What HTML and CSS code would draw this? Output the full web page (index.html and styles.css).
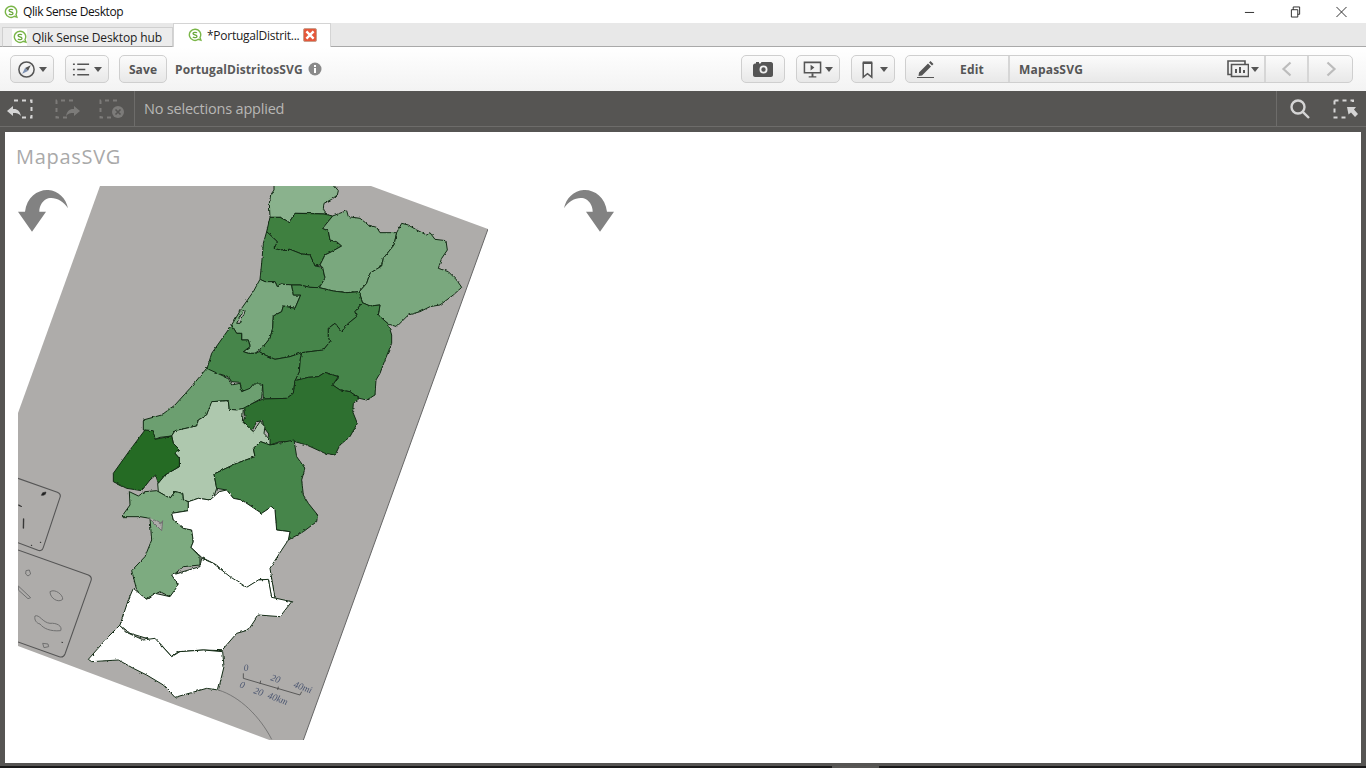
FILE: index.html
```html
<!DOCTYPE html>
<html lang="en">
<head>
<meta charset="utf-8">
<title>Qlik Sense Desktop</title>
<link rel="stylesheet" href="styles.css">
</head>
<body>
<svg class="defs" aria-hidden="true">
  <defs>
    <symbol id="qlik" viewBox="0 0 14 14">
      <path class="q-ring" d="M7 1.2a5.6 5.6 0 1 0 3.3 10.1l2.6.9-.9-2.7A5.6 5.6 0 0 0 7 1.2z"/>
      <path class="q-s" d="M9 4.9C8.300 4.200 5 4 5 5.600C5 7.300 9 6.600 9 8.400C9 10 5.700 9.800 4.900 9"/>
    </symbol>
    <symbol id="turn" viewBox="0 0 50 43">
      <path d="M0 22.700H7C8.700 7.700 20.300.3 30.300 1C40.300 1.700 48 9.300 50 19.300C45.300 11.700 37 7.700 30.300 9.300C25.300 11 21.300 16 21.300 22.700H28L14 42.700Z"/>
    </symbol>
    <filter id="rough" filterUnits="userSpaceOnUse" x="0" y="150" width="520" height="620" color-interpolation-filters="sRGB">
      <feTurbulence type="fractalNoise" baseFrequency="0.25" numOctaves="2" seed="7" result="n"/>
      <feDisplacementMap in="SourceGraphic" in2="n" scale="2.600" xChannelSelector="R" yChannelSelector="G"/>
      <feGaussianBlur stdDeviation="0.35"/>
    </filter>
  </defs>
</svg>

<header class="titlebar">
  <svg class="logo"><use href="#qlik"/></svg>
  <span class="app-name">Qlik Sense Desktop</span>
  <div class="win-controls">
    <svg class="win-icon" viewBox="0 0 12 12"><path d="M1 6.500H11"/></svg>
    <svg class="win-icon" viewBox="0 0 12 12"><path d="M1.500 3.500H8.500V11.500H1.500ZM3.500 3.500V.5H10.500V8.500H8.500"/></svg>
    <svg class="win-icon" viewBox="0 0 12 12"><path d="M.5.5L11.500 11.500M11.500.5L.5 11.500"/></svg>
  </div>
</header>

<nav class="tabbar">
  <div class="tab tab-idle">
    <span class="tab-logo-box"><svg class="logo"><use href="#qlik"/></svg></span>
    <span>Qlik Sense Desktop hub</span>
  </div>
  <div class="tab tab-active">
    <svg class="logo"><use href="#qlik"/></svg>
    <span class="tab-title">*PortugalDistrit...</span>
    <span class="tab-close"><svg viewBox="0 0 10 10"><path d="M2 2L8 8M8 2L2 8"/></svg></span>
  </div>
</nav>

<div class="toolbar">
  <button class="btn btn-icon">
    <svg class="ico" viewBox="0 0 20 20"><circle class="line" cx="10" cy="10" r="8"/><path class="needle-a" d="M14.500 5.500L11.500 11.500L8.500 8.500Z"/><path class="needle-b" d="M5.500 14.500L8.500 8.500L11.500 11.500Z"/></svg>
    <i class="caret"></i>
  </button>
  <button class="btn btn-icon">
    <svg class="ico" viewBox="0 0 20 20"><path class="line" d="M1 4.500H3M5.500 4.500H18M1 10H3M5.500 10H14M1 15.500H3M5.500 15.500H18"/></svg>
    <i class="caret"></i>
  </button>
  <button class="btn btn-text">Save</button>
  <span class="app-title">PortugalDistritosSVG</span>
  <svg class="info" viewBox="0 0 14 14"><circle cx="7" cy="7" r="6.500"/><rect class="info-mark" x="6" y="6" width="2" height="5"/><rect class="info-mark" x="6" y="3" width="2" height="2"/></svg>

  <div class="toolbar-right">
    <button class="btn btn-cam">
      <svg class="ico-cam" viewBox="0 0 20 16"><path class="solid" fill-rule="evenodd" d="M2 2.500H3V1H6V2.500H7.500L8.500 1H18C19 1 20 2 20 3V14C20 15 19 16 18 16H2C1 16 0 15 0 14V4.500C0 3.500 1 2.500 2 2.500ZM10.500 4.500A4 4 0 1 0 10.500 12.500A4 4 0 1 0 10.500 4.500ZM10.500 6.300A2.200 2.200 0 1 1 10.500 10.700A2.200 2.200 0 1 1 10.500 6.300Z"/></svg>
    </button>
    <button class="btn btn-icon">
      <svg class="ico" viewBox="0 0 20 20"><path class="line" d="M1.500 2.500H18.500V13.500H1.500Z"/><path class="solid" d="M8 5L12 8L8 11ZM9 14H11V17H14V18.500H6V17H9Z"/></svg>
      <i class="caret"></i>
    </button>
    <button class="btn btn-icon">
      <svg class="ico" viewBox="0 0 20 20"><path class="line" d="M5.500 3.500H14.500V18L10 14.500L5.500 18Z"/><path class="solid" d="M5 1.500H15V4H5Z"/></svg>
      <i class="caret"></i>
    </button>
    <div class="btn-group">
      <button class="group-item item-edit">
        <svg class="ico-pen" viewBox="0 0 18 18"><path class="solid" d="M2 12.500L11 3.500L14 6.500L5 15.500L1.500 16ZM12 2.500L13.500 1L16.500 4L15 5.500Z"/><path class="hair" d="M0 17.500H17"/></svg>
        <span>Edit</span>
      </button>
      <div class="group-item item-sheet">
        <span>MapasSVG</span>
        <svg class="ico-sheet" viewBox="0 0 22 18"><path class="line" d="M4.500 14.500H1V1H18V4"/><path class="line" d="M4.500 4.500H21.500V16.500H4.500Z"/><path class="solid" d="M8 9H10V13H8ZM12 7H14V13H12ZM16 10H18V13H16Z"/></svg>
        <i class="caret"></i>
      </div>
      <button class="group-item item-nav"><svg class="chev" viewBox="0 0 12 16"><path d="M9.500 1.500L2.500 8L9.500 14.500"/></svg></button>
      <button class="group-item item-nav"><svg class="chev" viewBox="0 0 12 16"><path d="M2.500 1.500L9.500 8L2.500 14.500"/></svg></button>
    </div>
  </div>
</div>

<div class="selbar">
  <div class="sel-tools">
    <svg class="sel-ico sel-on sel-first" viewBox="0 0 26 20"><path class="dash" d="M7 1.500H24.500V18.500H11"/><path class="fill" d="M0 12L6 7V10C10 9.500 13 12 14 17C12 14.500 9.500 14 6 14V17Z"/></svg>
    <svg class="sel-ico sel-off" viewBox="0 0 26 20"><path class="dash" d="M18 1.500H1.500V18.500H12"/><path class="fill" d="M25 12L19 7V10C15 9.500 12 12 11 17C13 14.500 15.500 14 19 14V17Z"/></svg>
    <svg class="sel-ico sel-off" viewBox="0 0 26 20"><path class="dash" d="M18 1.500H1.500V18.500H12"/><circle class="fill" cx="19" cy="13" r="6"/><path class="cross" d="M16.500 10.500L21.500 15.500M21.500 10.500L16.500 15.500"/></svg>
  </div>
  <div class="sel-text">No selections applied</div>
  <div class="sel-right">
    <svg class="sel-search" viewBox="0 0 20 20"><circle cx="8" cy="8" r="6.500"/><path d="M12.800 12.800L19 19"/></svg>
    <svg class="sel-ico sel-on" viewBox="0 0 26 20"><path class="dash" d="M1.500 1.500H20V6M1.500 1.500V18.500H14"/><path class="fill" d="M14 8H23L21 10.500L25 15L22 18L18 13.500L15.500 15.500Z"/></svg>
  </div>
</div>

<main class="sheet">
  <h1 class="sheet-title">MapasSVG</h1>
  <div class="sheet-body">
    <svg class="map" viewBox="18 186 470 554">
      <path class="map-bg" d="M100 186H371L488 229L303 741H272L18 646V413Z"/>
      <path class="map-edge" d="M488 229L303 741"/>
      <g class="map-lines" transform="translate(0 460) scale(.33333)">
        <path d="M54 55L172 97Q184 102 180 112L130 262Q126 276 112 270L54 248"/>
        <path d="M54 270L265 345Q277 350 273 362L195 582Q190 594 178 590L54 546"/>
      </g>
      <g class="map-curve" transform="translate(0 460) scale(.33333)">
        <path d="M655 690C720 710 780 770 815 838"/>
      </g>
      <g class="map-isles" transform="translate(0 460) scale(.33333)">
        <path d="M78 332L88 330L92 342L84 348L77 342Z"/>
        <path d="M150 395C165 385 190 405 188 418C175 430 150 415 150 395Z"/>
        <path d="M105 468C118 462 128 488 150 490C170 488 188 498 182 512C150 515 130 505 120 492C110 490 102 480 105 468Z"/>
        <path d="M55 378L92 413L84 416L55 390Z"/>
        <path d="M128 550L144 552L146 560L132 563Z"/>
      </g>
      <g class="map-specks" transform="translate(0 460) scale(.33333)">
        <path d="M124 106L128 98L138 96L136 103L130 106Z"/>
        <path d="M56 134L66 140L56 137Z"/>
        <path d="M70 176L72 176L71 205L69 205Z"/>
        <path d="M93 255L96 256L95 258Z"/>
        <path d="M120 246L123 247L122 249Z"/>
        <path d="M185 546L188 547L187 549Z"/>
      </g>
      <g class="regions" filter="url(#rough)">
        <g transform="translate(200 180) scale(.33333)">
          <path class="c-viana" d="M222 10L222 30L212 45L208 70L210 112L240 112L268 126L285 100L330 100L372 102L378 104L370 85L372 70L395 58L412 45L415 32L397 10Z"/>
          <path class="c-braga" d="M210 112L240 112L268 126L285 100L372 102L398 108L368 145L385 153L390 180L410 185L425 198L395 215L375 225L360 255L345 258L330 225L305 222L270 208L240 210L222 205L232 185L200 155Z"/>
          <path class="c-mid" d="M200 155L232 185L222 205L240 210L270 208L305 222L330 225L345 258L368 262L375 295L358 323L330 322L300 315L275 315L240 312L232 320L225 305L195 305L180 298L185 250L190 190Z"/>
          <path class="c-light" d="M398 108L440 92L445 110L480 115L505 135L530 142L540 158L590 158L582 195L550 235L545 258L510 280L500 310L478 335L440 338L400 333L358 323L375 295L368 262L360 255L375 225L395 215L425 198L410 185L390 180L385 153L368 145Z"/>
          <path class="c-light" d="M590 158L605 130L625 135L650 150L680 165L690 158L705 178L738 182L742 210L725 235L715 265L745 275L770 300L785 322L760 345L720 375L690 380L660 395L625 405L590 440L565 432L535 405L540 375L510 378L487 368L478 335L500 310L510 280L545 258L550 235L582 195Z"/>
          <path class="c-light" d="M180 298L195 305L225 305L232 320L240 312L275 315L280 345L302 345L285 385L250 378L245 395L220 408L218 445L210 475L185 505L165 520L145 520L130 515L150 500L145 480L125 480L125 460L110 460L95 435L125 385L160 335Z"/>
          <path class="c-lagoon" d="M110 430L130 390L135 395L120 430Z"/>
          <path class="c-mid" d="M275 315L300 315L330 322L358 323L400 333L440 338L478 335L487 368L465 395L470 410L445 430L425 455L405 430L385 445L385 470L390 485L370 510L305 518L270 530L225 538L195 525L178 515L185 505L210 475L218 445L220 408L245 395L250 378L285 385L302 345L280 345Z"/>
          <path class="c-mid" d="M487 368L510 378L540 375L535 405L565 432L575 465L575 490L555 540L540 580L528 600L525 645L500 660L478 655L450 635L420 630L398 615L415 590L375 577L355 590L325 592L285 602L298 575L300 540L305 518L370 510L390 485L385 470L385 445L405 430L425 455L445 430L470 410L465 395Z"/>
          <path class="c-mid" d="M95 435L110 460L125 460L125 480L145 480L150 500L130 515L145 520L165 520L178 515L195 525L225 538L270 530L305 518L300 540L298 575L285 602L280 640L260 655L190 657L188 615L160 615L150 630L125 635L120 607L95 605L85 590L20 570L35 520Z"/>
          <path class="c-dark" d="M130 680L190 657L260 655L280 640L285 602L325 592L355 590L375 577L415 590L398 615L420 630L450 635L478 655L460 670L458 695L472 730L450 770L420 795L405 825L375 820L320 795L285 785L240 785L210 795L205 760L190 740L188 722L170 725L155 755L125 735L135 710Z"/>
        </g>
        <g transform="translate(90 360) scale(.33333)">
          <path class="c-leiria" d="M350 25L415 55L425 75L450 70L455 95L480 85L490 72L518 72L515 115L460 145L440 150L417 148L415 122L367 125L350 165L325 180L320 198L255 212L245 228L210 232L195 238L190 215L160 210L160 180L215 165L255 135L300 85Z"/>
          <path class="c-pale" d="M365 125L415 122L417 148L440 150L460 145L457 185L490 215L510 185L525 200L522 220L540 240L540 255L512 245L490 265L495 290L440 310L372 342L380 385L370 415L385 430L388 455L378 455L360 420L325 415L295 425L280 420L278 400L255 395L240 415L205 395L203 370L225 345L268 320L268 295L255 280L270 270L250 250L245 228L255 212L320 198L325 180L350 165Z"/>
          <path class="c-lisbon" d="M165 210L190 212L195 238L245 228L250 250L270 270L255 280L268 295L268 320L225 345L205 370L197 345L180 360L155 392L110 385L70 365L70 340L120 270Z"/>
          <path class="c-mid" d="M372 342L440 310L495 290L490 265L512 245L540 255L612 240L620 290L645 325L635 360L640 405L655 430L683 465L680 485L640 515L595 540L600 515L560 510L555 450L545 440L515 460L455 420L430 415L410 390L380 385Z"/>
          <path class="c-setubal" d="M118 395L145 408L165 395L200 392L240 415L255 395L278 400L280 420L295 425L295 452L245 460L250 480L280 505L305 510L310 545L303 562L330 590L330 615L280 620L250 645L265 680L240 710L210 695L165 718L140 690L130 650L125 632L165 590L185 540L180 475L150 470L95 470L120 435Z"/>
          <path class="c-estuary" d="M178 475L215 512L218 482L212 492L190 478"/>
          <path class="c-white" d="M295 425L325 415L360 420L388 395L410 390L430 415L455 420L515 460L545 440L555 450L560 510L600 515L595 540L575 570L540 625L555 715L545 715L535 660L510 658L470 683L425 660L380 615L335 592L303 562L310 545L305 510L280 505L250 480L245 460L295 452Z"/>
        </g>
        <g transform="translate(0 460) scale(.33333)">
          <path class="c-white" d="M400 385L440 418L465 400L510 410L535 375L515 345L600 320L605 295L640 310L690 350L740 382L775 360L805 358L815 412L875 425L840 470L775 465L745 510L710 520L665 572L610 570L535 575L515 590L480 550L440 535L390 520L360 495L385 420Z"/>
          <path class="c-white" d="M360 495L375 515L430 540L465 535L515 590L540 575L610 570L668 575L672 620L655 690L620 685L525 712L490 675L440 645L400 625L355 600L275 605L265 598L325 530Z"/>
        </g>
      </g>
      <g class="scale" transform="translate(0 460) scale(.33333)">
        <path d="M730 640V655L900 705L905 695M782 662L780 672M835 680L833 690"/>
      </g>
      <g class="scale-text">
        <text transform="translate(244 671) rotate(-5)">0</text>
        <text transform="translate(270 680) rotate(20)">20</text>
        <text transform="translate(293 687) rotate(20)">40mi</text>
        <text transform="translate(239 687) rotate(20)">0</text>
        <text transform="translate(253 693) rotate(20)">20</text>
        <text transform="translate(267 698) rotate(20)">40km</text>
      </g>
    </svg>
    <svg class="turn turn-left"><use href="#turn"/></svg>
    <svg class="turn turn-right"><use href="#turn"/></svg>
  </div>
</main>

<footer class="statusbar"><span class="status-block"></span></footer>
</body>
</html>
```

FILE: styles.css
```css
* { box-sizing: border-box; }
html, body { margin: 0; padding: 0; }
body {
  width: 1366px;
  height: 768px;
  overflow: hidden;
  background: #565553;
  font-family: "Open Sans", "Noto Sans", sans-serif;
  display: flex;
  flex-direction: column;
}
.defs { width: 0; height: 0; position: absolute; }
.q-ring { fill: #fff; stroke: #7ab648; stroke-width: 1.4; }
.q-s { fill: none; stroke: #6aa83c; stroke-width: 1.3; }

/* title bar */
.titlebar {
  height: 23px;
  background: #fff;
  display: flex;
  align-items: center;
  padding-left: 4px;
  flex: none;
}
.logo { width: 14px; height: 14px; display: block; flex: none; }
.app-name { margin-left: 5px; font-size: 12px; color: #111; letter-spacing: -.4px; }
.win-controls { margin-left: auto; margin-right: 19px; display: flex; gap: 35px; }
.win-icon { width: 11px; height: 12px; fill: none; stroke: #222; stroke-width: 1; display: block; }

/* tabs */
.tabbar {
  height: 24px;
  flex: none;
  background: #e8e8e8;
  border-bottom: 1px solid #a9a9a9;
  display: flex;
  align-items: flex-end;
  padding-left: 2px;
  font-size: 12px;
}
.tab { display: flex; align-items: center; color: #222; }
.tab-idle {
  width: 171px;
  height: 20px;
  margin-bottom: -1px;
  background: #ececec;
  border: 1px solid #d0d0d0;
  border-bottom: 1px solid #a9a9a9;
  padding-left: 9px;
  gap: 5px;
  letter-spacing: -.12px;
}
.tab-logo-box {
  width: 15px;
  height: 17px;
  background: #fff;
  display: flex;
  align-items: center;
  justify-content: center;
}
.tab-active {
  width: 158px;
  height: 24px;
  margin-bottom: -1px;
  background: #fff;
  border: 1px solid #d4d4d4;
  border-bottom: 0;
  padding-left: 14px;
  padding-bottom: 1px;
}
.tab-title { margin-left: 5px; width: 96px; letter-spacing: -.25px; white-space: nowrap; }
.tab-close {
  width: 14px;
  height: 14px;
  background: #e4583b;
  border: 1px solid #c9a08e;
  border-radius: 2px;
  display: flex;
}
.tab-close svg { width: 12px; height: 12px; fill: none; stroke: #fff; stroke-width: 2; }

/* toolbar */
.toolbar {
  height: 44px;
  flex: none;
  background: linear-gradient(#fff, #f3f3f3);
  display: flex;
  align-items: center;
  padding: 0 13px 0 10px;
}
.btn {
  height: 28px;
  padding: 0;
  border: 1px solid #cfcfcf;
  border-radius: 5px;
  background: linear-gradient(#fbfbfb, #e8e8e8);
  display: flex;
  align-items: center;
  justify-content: center;
  font: inherit;
  color: #555;
}
.btn-icon { width: 44px; gap: 3px; margin-right: 11px; }
.btn-text { width: 48px; font-weight: 700; font-size: 12px; margin-left: -1px; letter-spacing: .1px; }
.btn-cam { width: 44px; margin-right: 11px; }
.ico { width: 19px; height: 19px; flex: none; }
.ico-cam { width: 20px; height: 16px; }
.ico-pen { width: 18px; height: 18px; flex: none; }
.ico-sheet { width: 22px; height: 18px; flex: none; }
.line { fill: none; stroke: #555; stroke-width: 1.6; }
.hair { fill: none; stroke: #555; stroke-width: 1; }
.solid { fill: #555; }
.needle-a { fill: #555; }
.needle-b { fill: #7b8fb0; }
.caret {
  width: 0;
  height: 0;
  border-left: 4px solid transparent;
  border-right: 4px solid transparent;
  border-top: 5px solid #555;
  flex: none;
}
.app-title {
  margin-left: 8px;
  font-weight: 700;
  font-size: 12px;
  color: #595959;
  letter-spacing: .1px;
}
.info { width: 14px; height: 14px; margin-left: 5px; fill: #8a8a8a; flex: none; }
.info-mark { fill: #fff; }
.toolbar-right { margin-left: auto; display: flex; align-items: center; }
.btn-group {
  display: flex;
  height: 28px;
  width: 448px;
  margin-left: -1px;
  border: 1px solid #cfcfcf;
  border-radius: 5px;
  background: linear-gradient(#fbfbfb, #e8e8e8);
  overflow: hidden;
}
.group-item {
  flex: none;
  height: 100%;
  padding: 0;
  border: 0;
  border-right: 2px solid #d6d6d6;
  background: none;
  display: flex;
  align-items: center;
  font: inherit;
  font-weight: 700;
  font-size: 12px;
  color: #555;
  letter-spacing: .2px;
}
.item-edit { width: 104px; padding-left: 11px; gap: 25px; }
.item-sheet { width: 256px; padding-left: 9px; }
.item-sheet span { margin-right: auto; }
.item-sheet .caret { margin: 0 5px 0 2px; }
.item-nav { width: 43px; justify-content: center; }
.item-nav:last-child { border-right: 0; }
.chev { width: 12px; height: 16px; fill: none; stroke: #bcbcbc; stroke-width: 2.200; }

/* selection bar */
.selbar {
  height: 36px;
  flex: none;
  display: flex;
  align-items: center;
  background: #565553;
  border-bottom: 1px solid #6d6c6a;
}
.sel-tools { display: flex; gap: 18px; padding-left: 7px; width: 134px; flex: none; }
.sel-first { margin-right: 4px; }
.sel-ico { width: 26px; height: 20px; flex: none; }
.dash { fill: none; stroke-width: 2; stroke-dasharray: 4 4; }
.sel-on .dash { stroke: #d5d5d5; }
.sel-on .fill { fill: #d5d5d5; }
.sel-off .dash { stroke: #7c7b79; }
.sel-off .fill { fill: #7c7b79; }
.cross { stroke: #565553; stroke-width: 1.600; fill: none; }
.sel-text {
  flex: 1;
  height: 100%;
  border-left: 1px solid #6d6c6a;
  padding-left: 9px;
  display: flex;
  align-items: center;
  font-size: 14.500px;
  font-weight: 500;
  color: #b8b7b5;
  letter-spacing: -.2px;
}
.sel-right {
  width: 90px;
  height: 100%;
  border-left: 1px solid #6d6c6a;
  display: flex;
  align-items: center;
  padding-left: 13px;
  gap: 23px;
  flex: none;
}
.sel-search { width: 20px; height: 20px; fill: none; stroke: #d5d5d5; stroke-width: 2.400; flex: none; }

/* sheet */
.sheet {
  margin: 5px 5px 0;
  height: 631px;
  background: #fff;
  flex: none;
}
.sheet-title {
  margin: 0;
  height: 54px;
  padding: 11px 0 0 11px;
  font-size: 20px;
  line-height: 28px;
  font-weight: 400;
  color: #a9a9a9;
  letter-spacing: .7px;
}
.sheet-body { position: relative; display: flex; padding-left: 13px; align-items: flex-start; }
.map { width: 470px; height: 554px; display: block; flex: none; }
.map-bg { fill: #aeacaa; }
.map-edge { fill: none; stroke: #666; stroke-width: 1; }
.map-lines { fill: none; stroke: #555; stroke-width: 3.200; }
.map-curve { fill: none; stroke: #6a6a6a; stroke-width: 2.400; }
.map-isles { fill: none; stroke: #6f6f6f; stroke-width: 3; }
.map-specks { fill: #222; stroke: #222; stroke-width: 1.500; }
.regions path { stroke: #122a14; stroke-width: 3; stroke-linejoin: round; }
.c-viana { fill: #8ab28d; }
.c-braga { fill: #3f8040; }
.c-mid { fill: #46854a; }
.c-light { fill: #7aa87e; }
.c-lagoon { fill: #aeacaa; }
.c-dark { fill: #2e7030; }
.c-leiria { fill: #6c9f70; }
.c-pale { fill: #aec8ae; }
.c-lisbon { fill: #256b24; }
.c-setubal { fill: #7dab80; }
.regions .c-estuary { fill: #aeacaa; stroke: #6f6f6f; }
.c-white { fill: #fff; }
.scale path { fill: none; stroke: #444; stroke-width: 2.400; }
.scale-text text {
  font-family: "Liberation Serif", serif;
  font-style: italic;
  font-size: 9.500px;
  fill: #4a5570;
}
.turn { width: 50px; height: 43px; fill: #828282; flex: none; display: block; }
.turn-left { position: absolute; left: 13px; top: 3px; }
.turn-right { margin: 3px 0 0 76px; transform: scaleX(-1); }

/* bottom edge */
.statusbar {
  height: 2px;
  margin-top: 3px;
  flex: none;
  background: #1a1a1a;
  display: flex;
}
.status-block { width: 47px; margin-left: 832px; background: #565553; }
```
